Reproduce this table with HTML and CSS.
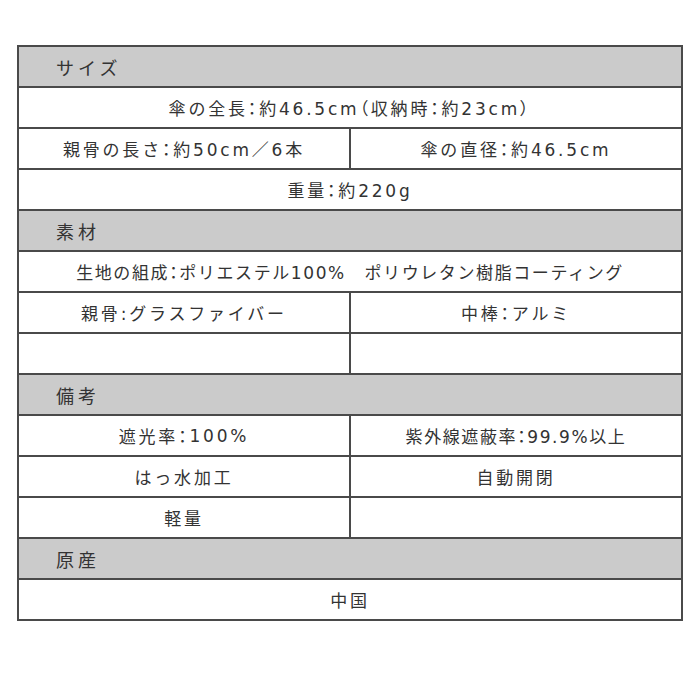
FILE: index.html
```html
<!DOCTYPE html>
<html lang="ja">
<head>
<meta charset="utf-8">
<link rel="stylesheet" href="styles.css">
</head>
<body>
<div class="spec">
  <div class="head">サイズ</div>
  <div class="cell full">傘の全長<span class="c">：</span>約46.5cm<span class="c">（</span>収納時<span class="c">：</span>約23cm<span class="c">）</span></div>
  <div class="cell">親骨の長さ<span class="c">：</span>約50cm／6本</div>
  <div class="cell">傘の直径<span class="c">：</span>約46.5cm</div>
  <div class="cell full">重量<span class="c">：</span>約220g</div>

  <div class="head">素材</div>
  <div class="cell full tight">生地の組成<span class="c">：</span>ポリエステル100%　ポリウレタン樹脂コーティング</div>
  <div class="cell">親骨:グラスファイバー</div>
  <div class="cell">中棒<span class="c">：</span>アルミ</div>
  <div class="cell"></div>
  <div class="cell"></div>

  <div class="head">備考</div>
  <div class="cell">遮光率<span class="c">：</span>100%</div>
  <div class="cell tight">紫外線遮蔽率<span class="c">：</span>99.9%以上</div>
  <div class="cell">はっ水加工</div>
  <div class="cell">自動開閉</div>
  <div class="cell">軽量</div>
  <div class="cell"></div>

  <div class="head">原産</div>
  <div class="cell full">中国</div>
</div>
</body>
</html>
```

FILE: styles.css
```css
html, body {
  margin: 0;
  padding: 0;
  background: #ffffff;
}

body {
  padding: 45px 0 0 17px;
  font-family: "DejaVu Sans", "Noto Sans CJK JP", sans-serif;
  color: #333333;
}

.spec {
  width: 666px;
  box-sizing: border-box;
  display: grid;
  grid-template-columns: 1fr 1fr;
  grid-auto-rows: 41px;
  border-top: 2px solid #4a4a4a;
  border-left: 2px solid #4a4a4a;
}

.head,
.cell {
  box-sizing: border-box;
  border-right: 2px solid #4a4a4a;
  border-bottom: 2px solid #4a4a4a;
  display: flex;
  align-items: center;
  white-space: nowrap;
}

.head {
  grid-column: 1 / -1;
  background: #cbcbcb;
  padding-left: 37px;
  font-size: 18px;
  letter-spacing: 4px;
}

.cell {
  justify-content: center;
  font-size: 17px;
  letter-spacing: 2.8px;
  background: #ffffff;
}

.cell.tight {
  letter-spacing: 1.6px;
}

.full {
  grid-column: 1 / -1;
}

.c {
  font-family: "Noto Sans CJK JP", sans-serif;
  font-feature-settings: "palt";
}
```
